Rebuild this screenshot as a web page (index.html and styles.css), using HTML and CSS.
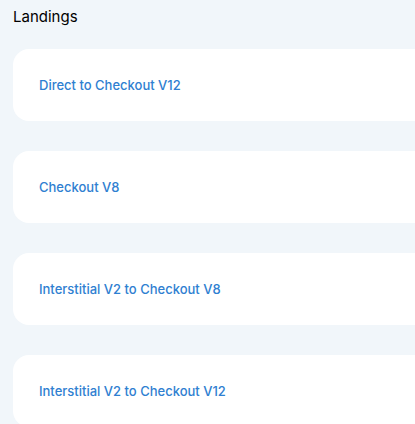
FILE: index.html
```html
<!DOCTYPE html>
<html>
<head>
<meta charset="utf-8">
<link rel="stylesheet" href="styles.css">
</head>
<body>
<div class="page">
  <h1 class="title">Landings</h1>
  <div class="list">
    <a class="card">Direct to Checkout V12</a>
    <a class="card">Checkout V8</a>
    <a class="card">Interstitial V2 to Checkout V8</a>
    <a class="card">Interstitial V2 to Checkout V12</a>
  </div>
</div>
</body>
</html>
```
FILE: styles.css
```css
html, body {
  margin: 0;
  padding: 0;
  background: #f1f6fa;
  overflow: hidden;
}
.page {
  padding: 7px 0 0 13px;
  font-family: Inter, "Noto Sans", sans-serif;
}
.title {
  margin: 0 0 22px 0;
  font-size: 15px;
  line-height: 20px;
  font-weight: 400;
  color: #000;
}
.list {
  display: flex;
  flex-direction: column;
  gap: 30px;
}
.card {
  display: flex;
  align-items: center;
  height: 72px;
  box-sizing: border-box;
  padding-left: 26px;
  background: #fff;
  border-radius: 16px 0 0 16px;
  color: #2f80d1;
  font-size: 13px;
  font-weight: 500;
  text-decoration: none;
}
```
